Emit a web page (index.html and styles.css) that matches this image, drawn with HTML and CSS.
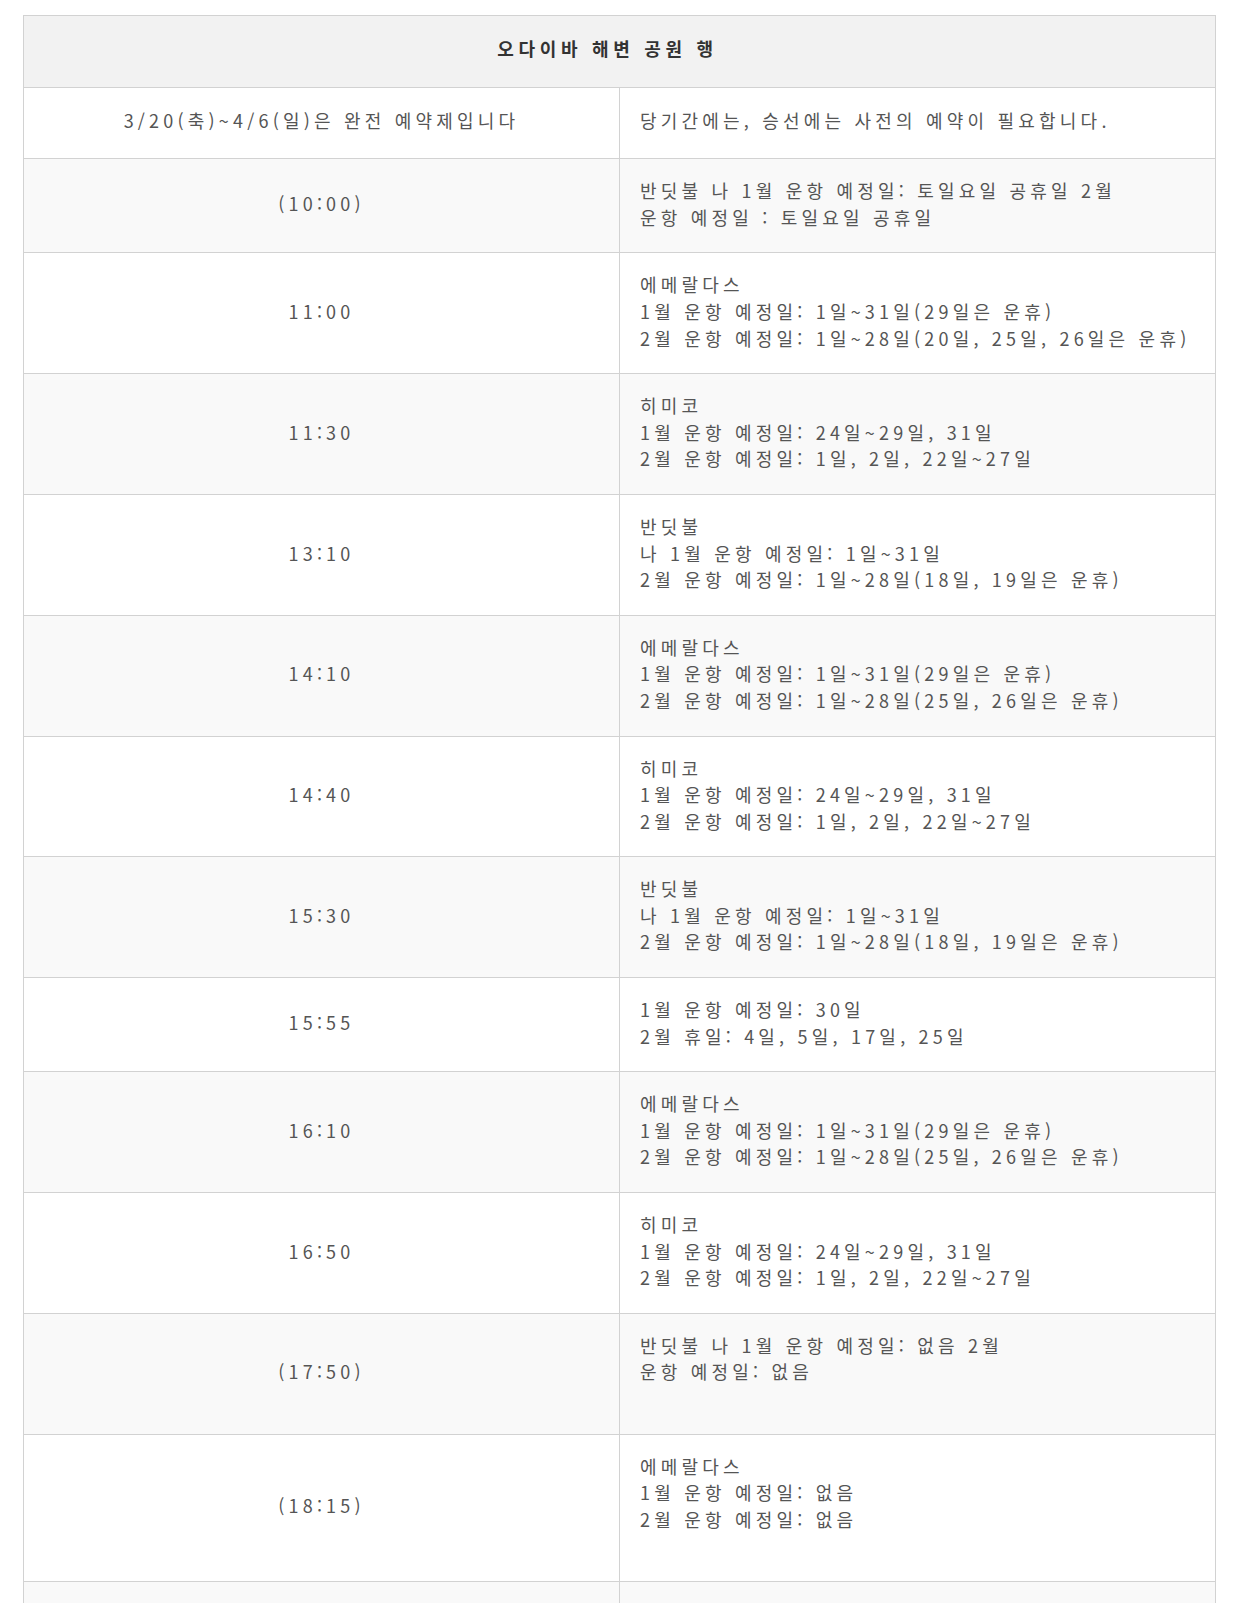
FILE: index.html
```html
<!DOCTYPE html>
<html lang="ko">
<head>
<meta charset="utf-8">
<title>오다이바 해변 공원 행</title>
<link rel="stylesheet" href="styles.css">
</head>
<body>
<div class="wrap">
<table class="timetable">
  <thead>
    <tr><th colspan="2" class="head">오다이바 해변 공원 행</th></tr>
  </thead>
  <tbody>
    <tr class="first">
      <td class="time">3/20(축)~4/6(일)은 완전 예약제입니다</td>
      <td class="info">당기간에는, 승선에는 사전의 예약이 필요합니다.</td>
    </tr>
    <tr>
      <td class="time">(10:00)</td>
      <td class="info">반딧불 나 1월 운항 예정일: 토일요일 공휴일 2월<br>운항 예정일 : 토일요일 공휴일</td>
    </tr>
    <tr>
      <td class="time">11:00</td>
      <td class="info">에메랄다스<br>1월 운항 예정일: 1일~31일(29일은 운휴)<br>2월 운항 예정일: 1일~28일(20일, 25일, 26일은 운휴)</td>
    </tr>
    <tr>
      <td class="time">11:30</td>
      <td class="info">히미코<br>1월 운항 예정일: 24일~29일, 31일<br>2월 운항 예정일: 1일, 2일, 22일~27일</td>
    </tr>
    <tr>
      <td class="time">13:10</td>
      <td class="info">반딧불<br>나 1월 운항 예정일: 1일~31일<br>2월 운항 예정일: 1일~28일(18일, 19일은 운휴)</td>
    </tr>
    <tr>
      <td class="time">14:10</td>
      <td class="info">에메랄다스<br>1월 운항 예정일: 1일~31일(29일은 운휴)<br>2월 운항 예정일: 1일~28일(25일, 26일은 운휴)</td>
    </tr>
    <tr>
      <td class="time">14:40</td>
      <td class="info">히미코<br>1월 운항 예정일: 24일~29일, 31일<br>2월 운항 예정일: 1일, 2일, 22일~27일</td>
    </tr>
    <tr>
      <td class="time">15:30</td>
      <td class="info">반딧불<br>나 1월 운항 예정일: 1일~31일<br>2월 운항 예정일: 1일~28일(18일, 19일은 운휴)</td>
    </tr>
    <tr>
      <td class="time">15:55</td>
      <td class="info">1월 운항 예정일: 30일<br>2월 휴일: 4일, 5일, 17일, 25일</td>
    </tr>
    <tr>
      <td class="time">16:10</td>
      <td class="info">에메랄다스<br>1월 운항 예정일: 1일~31일(29일은 운휴)<br>2월 운항 예정일: 1일~28일(25일, 26일은 운휴)</td>
    </tr>
    <tr>
      <td class="time">16:50</td>
      <td class="info">히미코<br>1월 운항 예정일: 24일~29일, 31일<br>2월 운항 예정일: 1일, 2일, 22일~27일</td>
    </tr>
    <tr>
      <td class="time">(17:50)</td>
      <td class="info">반딧불 나 1월 운항 예정일: 없음 2월<br>운항 예정일: 없음<br>&nbsp;</td>
    </tr>
    <tr>
      <td class="time">(18:15)</td>
      <td class="info">에메랄다스<br>1월 운항 예정일: 없음<br>2월 운항 예정일: 없음<br>&nbsp;</td>
    </tr>
    <tr>
      <td class="time">&nbsp;</td>
      <td class="info">&nbsp;<br>&nbsp;</td>
    </tr>
  </tbody>
</table>
</div>
</body>
</html>
```
FILE: styles.css
```css
html, body {
  margin: 0;
  padding: 0;
  background: #ffffff;
}

.wrap {
  padding: 15px 28px 0 23px;
}

.timetable {
  width: 100%;
  border-collapse: collapse;
  table-layout: fixed;
  font-family: "Noto Sans CJK KR", "Noto Sans", sans-serif;
  font-size: 18px;
  line-height: 26.6px;
  letter-spacing: 4.2px;
  color: #555555;
}

.timetable th,
.timetable td {
  border: 1px solid #d2d2d2;
  padding: 18px 20px 22px;
  vertical-align: middle;
}

.timetable .head {
  background: #f2f2f2;
  color: #333333;
  font-weight: bold;
  letter-spacing: 4.7px;
  text-align: center;
  padding: 19px 44px 25px 20px;
}

.timetable tbody tr:nth-child(even) td {
  background: #f9f9f9;
}

.timetable tbody tr:nth-child(odd) td {
  background: #ffffff;
}

.timetable .first td {
  padding-top: 19px;
  padding-bottom: 25px;
}

.time {
  width: 50%;
  text-align: center;
}

.info {
  width: 50%;
  text-align: left;
}
```
